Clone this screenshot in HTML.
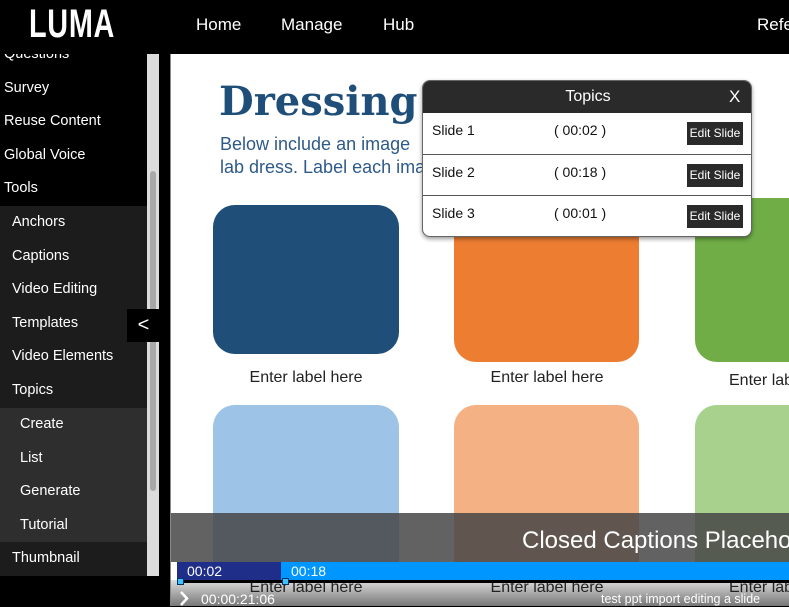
<!DOCTYPE html>
<html><head><style>
*{margin:0;padding:0;box-sizing:border-box}
body{width:789px;height:606px;overflow:hidden;background:#000;font-family:"Liberation Sans",sans-serif;position:relative}
.abs{position:absolute}
.nav{color:#fff;font-size:17px;top:15px;z-index:3}
.side{left:0;width:147px;height:33.5px;color:#fff;font-size:14.5px;line-height:33.5px;padding-left:4px}
.card{position:absolute;border-radius:22px}
.lbl{position:absolute;font-size:16px;color:#222;width:186px;text-align:center}
.row{position:absolute;left:0;width:329px;height:41px;border-top:1px solid #555;font-size:14px;color:#111}
.row .n{position:absolute;left:9px;top:9px}
.row .t{position:absolute;left:131px;top:9px}
.row .b{position:absolute;left:264px;top:9px;width:56px;height:23px;background:#2a2a2a;color:#fff;font-size:12px;line-height:23px;text-align:center}
</style></head><body>
<div class="abs side" style="top:38px;background:#000">Questions</div>
<div class="abs" style="left:0;top:0;width:789px;height:54px;background:#000;z-index:2"></div>
<div class="abs" style="left:29px;top:2px;color:#fff;font-size:40px;font-weight:bold;transform:scale(0.72,1);transform-origin:left;z-index:3;letter-spacing:1px">LUMA</div>
<div class="abs nav" style="left:196px">Home</div>
<div class="abs nav" style="left:281px">Manage</div>
<div class="abs nav" style="left:383px">Hub</div>
<div class="abs nav" style="left:757px">Refe</div>

<div class="abs side" style="top:72px;background:#000">Survey</div>
<div class="abs side" style="top:105px;background:#000">Reuse Content</div>
<div class="abs side" style="top:139px;background:#000">Global Voice</div>
<div class="abs side" style="top:172px;background:#000">Tools</div>
<div class="abs" style="left:0;top:206px;width:147px;height:202px;background:#1c1c1c"></div>
<div class="abs side" style="top:206px;padding-left:12px">Anchors</div>
<div class="abs side" style="top:240px;padding-left:12px">Captions</div>
<div class="abs side" style="top:273px;padding-left:12px">Video Editing</div>
<div class="abs side" style="top:307px;padding-left:12px">Templates</div>
<div class="abs side" style="top:340px;padding-left:12px">Video Elements</div>
<div class="abs side" style="top:374px;padding-left:12px">Topics</div>
<div class="abs" style="left:0;top:408px;width:147px;height:134px;background:#2e2e2e"></div>
<div class="abs side" style="top:408px;padding-left:20px">Create</div>
<div class="abs side" style="top:442px;padding-left:20px">List</div>
<div class="abs side" style="top:475px;padding-left:20px">Generate</div>
<div class="abs side" style="top:509px;padding-left:20px">Tutorial</div>
<div class="abs side" style="top:542px;background:#1c1c1c;padding-left:12px">Thumbnail</div>
<div class="abs" style="left:147px;top:54px;width:12px;height:522px;background:#dcdcdc"></div>
<div class="abs" style="left:150px;top:171px;width:6px;height:320px;background:#a8a8a8;border-radius:3px"></div>
<div class="abs" style="left:127px;top:309px;width:33px;height:33px;background:#000;color:#fff;font-size:20px;text-align:center;line-height:33px">&lt;</div>

<div class="abs" style="left:170px;top:54px;width:619px;height:552px;background:#fff;border-left:1px solid #888;overflow:hidden">
  <div class="abs" style="left:48px;top:24px;font-family:'DejaVu Serif','Liberation Serif',serif;font-weight:bold;font-size:40px;color:#1f4e79">Dressing :</div>
  <div class="abs" style="left:49px;top:79px;font-size:18px;line-height:23px;color:#2e5a8a;white-space:nowrap">Below include an image <span style="margin-left:190px">appr</span><br>lab dress. Label each ima</div>
  <div class="card" style="left:42px;top:151px;width:186px;height:149px;background:#1f4e79"></div>
  <div class="card" style="left:283px;top:151px;width:185px;height:157px;background:#ed7d31"></div>
  <div class="card" style="left:524px;top:144px;width:120px;height:164px;background:#70ad47"></div>
  <div class="lbl" style="left:42px;top:315px">Enter label here</div>
  <div class="lbl" style="left:283px;top:315px">Enter label here</div>
  <div class="lbl" style="left:510px;top:318px;text-align:left;padding-left:48px">Enter lab</div>
  <div class="card" style="left:42px;top:351px;width:186px;height:200px;background:#9dc3e6"></div>
  <div class="card" style="left:283px;top:351px;width:185px;height:200px;background:#f4b183"></div>
  <div class="card" style="left:524px;top:351px;width:120px;height:200px;background:#a9d18e"></div>
  <div class="abs" style="left:0;top:459px;width:619px;height:49px;background:rgba(70,70,70,.85)"></div>
  <div class="abs" style="left:351px;top:473px;font-size:24px;color:#fff;white-space:nowrap">Closed Captions Placeholo</div>
  <div class="abs" style="left:0;top:526px;width:619px;height:26px;background:linear-gradient(#ddd,#777)"></div>
  <div class="lbl" style="left:42px;top:525px">Enter label here</div>
  <div class="lbl" style="left:283px;top:525px">Enter label here</div>
  <div class="lbl" style="left:510px;top:525px;text-align:left;padding-left:48px">Enter lab</div>
</div>
<div class="abs" style="left:177px;top:562px;width:612px;height:18px;background:#0096ff"></div>
<div class="abs" style="left:177px;top:562px;width:104px;height:18px;background:#1f2e88"></div>
<div class="abs" style="left:187px;top:563px;color:#fff;font-size:14px">00:02</div>
<div class="abs" style="left:291px;top:563px;color:#fff;font-size:14px">00:18</div>
<div class="abs" style="left:177px;top:580px;width:612px;height:3px;background:#000"></div>
<div class="abs" style="left:177px;top:578px;width:7px;height:7px;background:#3fc0ff;border:1px solid #036"></div>
<div class="abs" style="left:282px;top:578px;width:7px;height:7px;background:#3fc0ff;border:1px solid #036"></div>
<svg class="abs" style="left:178px;top:591px" width="12" height="15"><path d="M3 1 L9 7.5 L3 14" stroke="#fff" stroke-width="2.5" fill="none"/></svg>
<div class="abs" style="left:201px;top:591px;color:#fff;font-size:14px">00:00:21:06</div>
<div class="abs" style="left:601px;top:592px;color:#fff;font-size:12.5px">test ppt import editing a slide</div>

<div class="abs" style="left:422px;top:80px;width:330px;height:157px;background:#fff;border:1px solid #666;border-radius:8px;box-shadow:0 2px 4px rgba(0,0,0,.4);overflow:hidden">
  <div class="abs" style="left:0;top:0;width:330px;height:32px;background:#2a2a2a;color:#fff;font-size:16px;line-height:32px;text-align:center">Topics</div>
  <div class="abs" style="left:306px;top:6px;color:#fff;font-size:17px">X</div>
  <div class="row" style="top:32px;border-top:none"><span class="n">Slide 1</span><span class="t">( 00:02 )</span><span class="b">Edit Slide</span></div>
  <div class="row" style="top:73px"><span class="n">Slide 2</span><span class="t">( 00:18 )</span><span class="b">Edit Slide</span></div>
  <div class="row" style="top:114px"><span class="n">Slide 3</span><span class="t">( 00:01 )</span><span class="b">Edit Slide</span></div>
</div>
</body></html>
